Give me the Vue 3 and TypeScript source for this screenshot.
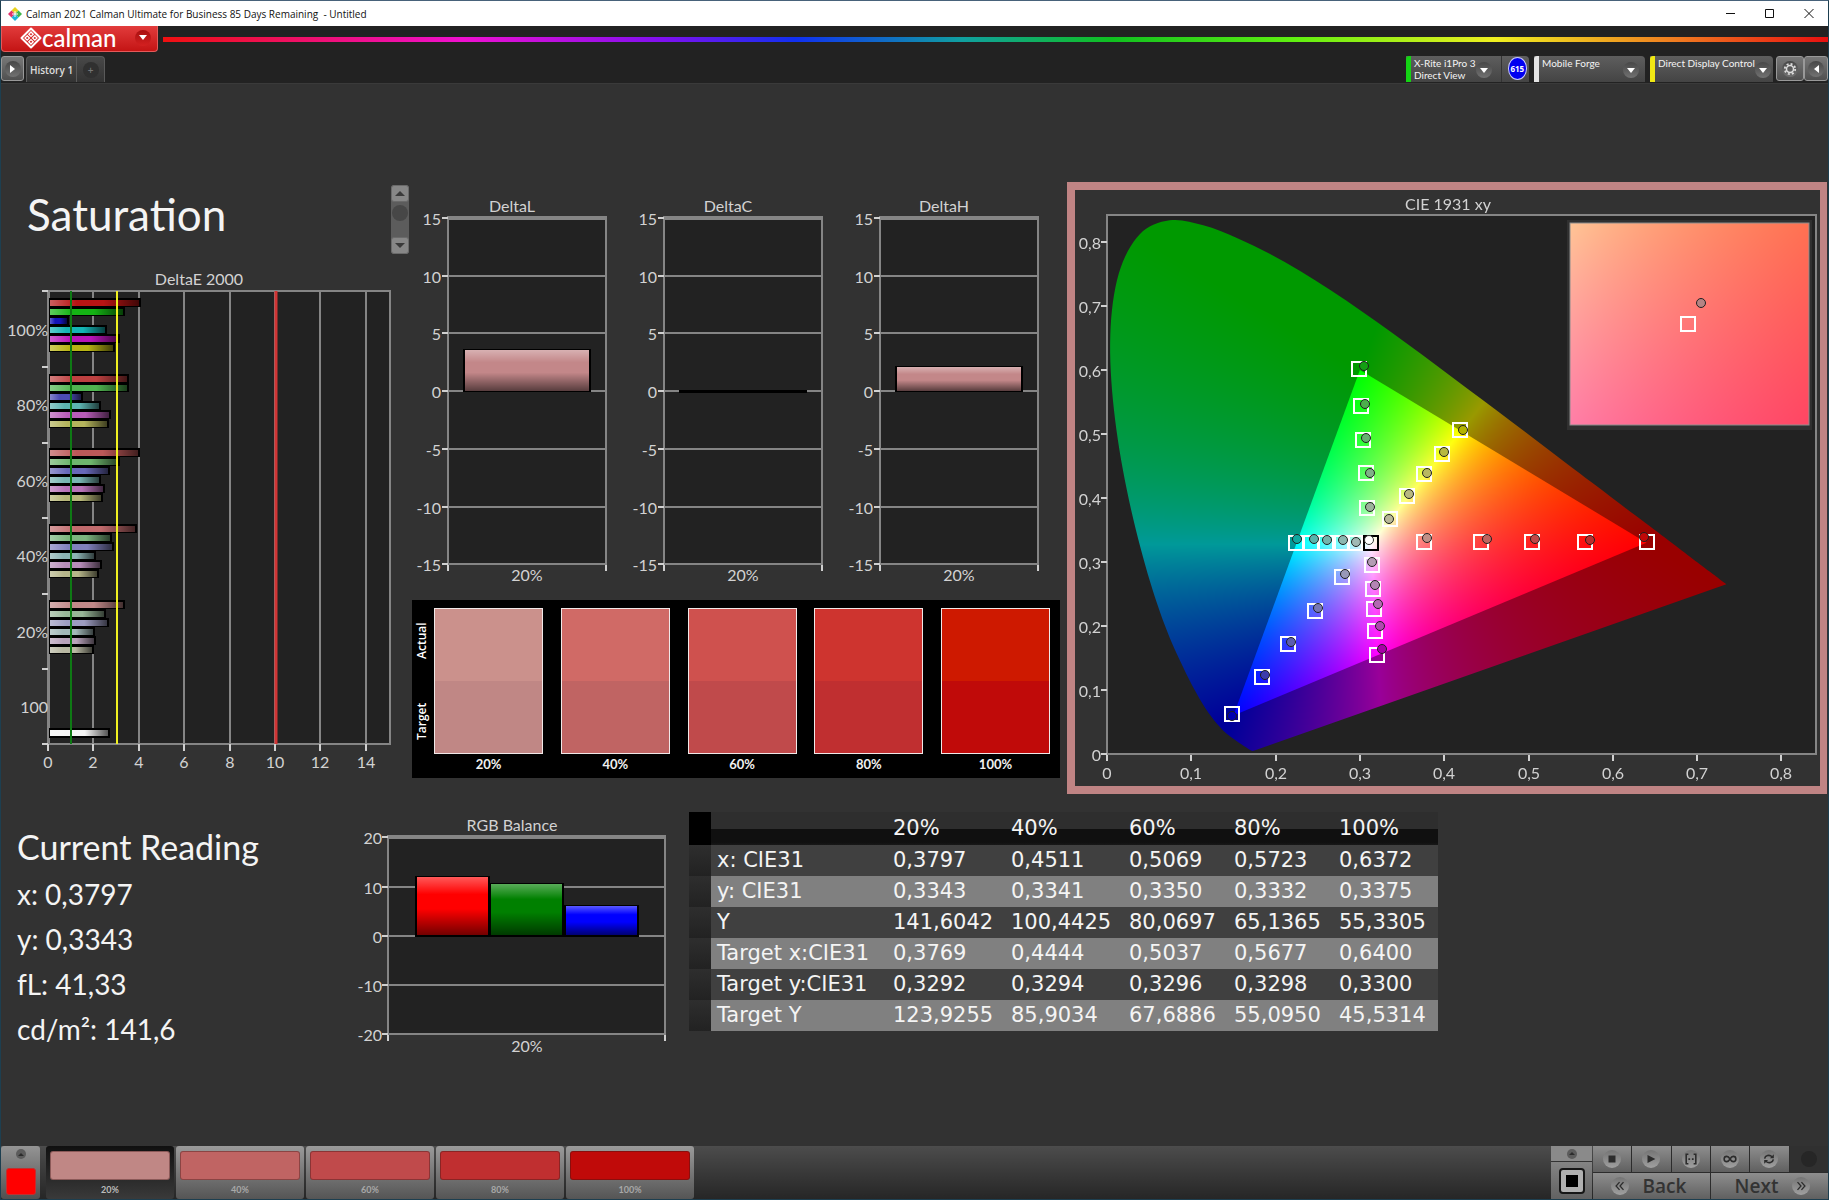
<script setup lang="ts">
import { onMounted, ref } from 'vue'

type Point = [number, number]

interface BarGroup {
  label: string
  y: number
  bars: { end: number; color: string }[]
}

/* ---------- DeltaE 2000 ---------- */
const hueColors: string[][] = [
  ['#b81414', '#14b414', '#1414b8', '#14b4b4', '#b814b8', '#b8b414'],
  ['#bd4040', '#50b450', '#4c4cb4', '#5cb4b0', '#b85cb8', '#b4b45c'],
  ['#bb5858', '#6db56d', '#6868b8', '#78b6b2', '#b872b8', '#b6b678'],
  ['#c06a6c', '#7cb57e', '#8080bc', '#8cb4b4', '#b68cb8', '#b6b68a'],
  ['#c08888', '#98b698', '#9c9cc0', '#a2b8b8', '#b8a2ba', '#b8b8a2'],
]
const barEnds: number[][] = [
  [141, 125, 69, 107, 120, 115],
  [129, 129, 83, 101, 111, 109],
  [140, 120, 110, 101, 105, 103],
  [137, 112, 114, 96, 102, 99],
  [125, 106, 109, 95, 96, 94],
]
const groupTops = [298, 374, 448, 524, 600]
const levels = ['100%', '80%', '60%', '40%', '20%']
const groups: BarGroup[] = levels.map((label, i) => ({
  label,
  y: groupTops[i],
  bars: barEnds[i].map((end, j) => ({ end, color: hueColors[i][j] })),
}))
const deTicksY = [291, 367, 443, 518, 594, 669, 744]
const deTicksX = [0, 2, 4, 6, 8, 10, 12, 14].map((v) => ({ v, x: Math.round(48 + v * 22.7) }))
const deLabels = ['100%', '80%', '60%', '40%', '20%', '100'].map((t, i) => ({ t, y: Math.round(335.6 + i * 75.5) }))

/* ---------- DeltaL / C / H ---------- */
const deltas = [
  { name: 'DeltaL', top: 168, height: 41 },
  { name: 'DeltaC', top: 209, height: 1 },
  { name: 'DeltaH', top: 185, height: 24 },
]
const deltaTicks = [
  { v: 15, y: 36 },
  { v: 10, y: 94 },
  { v: 5, y: 151 },
  { v: 0, y: 209 },
  { v: -5, y: 267 },
  { v: -10, y: 325 },
  { v: -15, y: 382 },
]

/* ---------- swatches ---------- */
const swatches = [
  { label: '20%', actual: '#cb918c', target: '#c08785' },
  { label: '40%', actual: '#d06a66', target: '#c06463' },
  { label: '60%', actual: '#cf514e', target: '#c04a4b' },
  { label: '80%', actual: '#ce342f', target: '#c02f30' },
  { label: '100%', actual: '#ce1900', target: '#c00a09' },
]
const current = ref(0)

/* ---------- RGB balance ---------- */
const rgbTicks = [
  { v: 20, y: 836 },
  { v: 10, y: 886 },
  { v: 0, y: 935 },
  { v: -10, y: 984 },
  { v: -20, y: 1033 },
]
const rgbBars = [
  { x: 416, y: 875, color: '#ff0000' },
  { x: 490, y: 882, color: '#008000' },
  { x: 565, y: 904, color: '#0000ff' },
]

/* ---------- readings ---------- */
const readings = ['x: 0,3797', 'y: 0,3343', 'fL: 41,33', 'cd/m²: 141,6']
const rows = [
  ['x: CIE31', '0,3797', '0,4511', '0,5069', '0,5723', '0,6372'],
  ['y: CIE31', '0,3343', '0,3341', '0,3350', '0,3332', '0,3375'],
  ['Y', '141,6042', '100,4425', '80,0697', '65,1365', '55,3305'],
  ['Target x:CIE31', '0,3769', '0,4444', '0,5037', '0,5677', '0,6400'],
  ['Target y:CIE31', '0,3292', '0,3294', '0,3296', '0,3298', '0,3300'],
  ['Target Y', '123,9255', '85,9034', '67,6886', '55,0950', '45,5314'],
]

/* ---------- chromaticity diagram ---------- */
const X0 = 1107
const Y0 = 754
const SX = 843
const SY = 640
const px = (x: number): number => Math.round(X0 + x * SX)
const py = (y: number): number => Math.round(Y0 - y * SY)
const tenths = [0, 1, 2, 3, 4, 5, 6, 7, 8].map((n) => ({ n: n / 10, t: n === 0 ? '0' : `0,${n}` }))

const targets: Point[] = [
  [0.2986, 0.601], [0.3015, 0.544], [0.3038, 0.491], [0.3078, 0.439], [0.309, 0.385],
  [0.4184, 0.5066], [0.3969, 0.469], [0.3765, 0.4374], [0.3555, 0.4035], [0.3352, 0.367],
  [0.2247, 0.33], [0.2415, 0.33], [0.2595, 0.33], [0.2785, 0.33], [0.2937, 0.33],
  [0.3765, 0.3315], [0.4434, 0.3315], [0.5044, 0.3315], [0.567, 0.3315], [0.64, 0.3315],
  [0.3148, 0.2958], [0.316, 0.2583], [0.3165, 0.2271], [0.3178, 0.1928], [0.3201, 0.1543],
  [0.2793, 0.2766], [0.2473, 0.223], [0.2153, 0.172], [0.1839, 0.12], [0.1484, 0.0628],
]
const actuals: { p: Point; c: string }[] = [
  { p: [0.3044, 0.6065], c: '#14a014' }, { p: [0.3055, 0.5462], c: '#4caf4c' }, { p: [0.3073, 0.493], c: '#66b070' },
  { p: [0.3114, 0.439], c: '#80b088' }, { p: [0.3125, 0.386], c: '#9cb49c' },
  { p: [0.4225, 0.5066], c: '#b4b400' }, { p: [0.3992, 0.4713], c: '#b8b840' }, { p: [0.38, 0.4396], c: '#b8b860' },
  { p: [0.3585, 0.4068], c: '#b8b880' }, { p: [0.334, 0.367], c: '#b8b898' },
  { p: [0.2258, 0.3364], c: '#10a8a0' }, { p: [0.245, 0.3364], c: '#58b4ac' }, { p: [0.2613, 0.335], c: '#74b4ac' },
  { p: [0.2805, 0.335], c: '#8cb8b0' }, { p: [0.295, 0.332], c: '#a0b8b4' },
  { p: [0.38, 0.3369], c: '#c09088' }, { p: [0.451, 0.3364], c: '#c06460' }, { p: [0.5074, 0.3364], c: '#c04848' },
  { p: [0.5725, 0.335], c: '#bc2c2c' }, { p: [0.6365, 0.3395], c: '#c00808' },
  { p: [0.3142, 0.2999], c: '#b49cb4' }, { p: [0.3177, 0.264], c: '#b484b4' }, { p: [0.3212, 0.2338], c: '#b468b4' },
  { p: [0.3236, 0.1995], c: '#b048b0' }, { p: [0.3265, 0.1646], c: '#a800a8' },
  { p: [0.2828, 0.2812], c: '#9898b8' }, { p: [0.2508, 0.2276], c: '#7878b4' }, { p: [0.2188, 0.1756], c: '#5c5cb0' },
  { p: [0.1874, 0.1231], c: '#3c3cac' }, { p: [0.1484, 0.059], c: '#0000b0' },
]

const locus: Point[] = [
  [0.1741, 0.005], [0.1733, 0.0048], [0.1714, 0.0051], [0.1689, 0.0069], [0.1644, 0.0109], [0.1566, 0.0177],
  [0.144, 0.0297], [0.1355, 0.0399], [0.1241, 0.0578], [0.1096, 0.0868], [0.0913, 0.1327], [0.0687, 0.2007],
  [0.0454, 0.295], [0.0235, 0.4127], [0.0082, 0.5384], [0.0039, 0.6548], [0.0139, 0.7502], [0.0389, 0.812],
  [0.0743, 0.8338], [0.1142, 0.8262], [0.1547, 0.8059], [0.1929, 0.7816], [0.2296, 0.7543], [0.2658, 0.7243],
  [0.3016, 0.6923], [0.3373, 0.6589], [0.3731, 0.6245], [0.4087, 0.5896], [0.4441, 0.5547], [0.4788, 0.5202],
  [0.5125, 0.4866], [0.5448, 0.4544], [0.5752, 0.4242], [0.6029, 0.3965], [0.627, 0.3725], [0.6482, 0.3514],
  [0.6658, 0.334], [0.6915, 0.3083], [0.714, 0.2859], [0.726, 0.274], [0.7347, 0.2653],
]
const gamut: Point[] = [[0.64, 0.33], [0.3, 0.6], [0.15, 0.06]]

function xyToRgb(x: number, y: number): [number, number, number] {
  const X = x / y
  const Z = (1 - x - y) / y
  const r = Math.max(0, 3.2406 * X - 1.5372 - 0.4986 * Z)
  const g = Math.max(0, -0.9689 * X + 1.8758 + 0.0415 * Z)
  const b = Math.max(0, 0.0557 * X - 0.204 + 1.057 * Z)
  const m = Math.max(r, g, b, 1e-6)
  return [(r / m) * 255, (g / m) * 255, (b / m) * 255]
}

function field(w: number, h: number, at: (i: number, j: number) => Point, gain: number): HTMLCanvasElement {
  const c = document.createElement('canvas')
  c.width = w
  c.height = h
  const ctx = c.getContext('2d')!
  const img = ctx.createImageData(w, h)
  for (let j = 0; j < h; j++) {
    for (let i = 0; i < w; i++) {
      const [x, y] = at(i, j)
      const rgb = xyToRgb(x, Math.max(y, 0.001))
      const k = (j * w + i) * 4
      img.data[k] = rgb[0] * gain
      img.data[k + 1] = rgb[1] * gain
      img.data[k + 2] = rgb[2] * gain
      img.data[k + 3] = 255
    }
  }
  ctx.putImageData(img, 0, 0)
  return c
}

/* The canvas shares its origin with the vector layer above it. */
const OX = 1075
const OY = 190
const diagram = ref<HTMLCanvasElement | null>(null)

function smoothPath(ctx: CanvasRenderingContext2D, pts: Point[]): void {
  const p = pts.map(([x, y]): Point => [X0 - OX + x * SX, Y0 - OY - y * SY])
  ctx.beginPath()
  ctx.moveTo(p[0][0], p[0][1])
  for (let i = 0; i < p.length - 1; i++) {
    const a = p[Math.max(i - 1, 0)]
    const b = p[i]
    const c = p[i + 1]
    const d = p[Math.min(i + 2, p.length - 1)]
    ctx.bezierCurveTo(
      b[0] + (c[0] - a[0]) / 6, b[1] + (c[1] - a[1]) / 6,
      c[0] - (d[0] - b[0]) / 6, c[1] - (d[1] - b[1]) / 6,
      c[0], c[1],
    )
  }
  ctx.closePath()
}

onMounted(() => {
  const cv = diagram.value
  if (!cv) return
  const ctx = cv.getContext('2d')!
  const at = (i: number, j: number): Point => [(i + OX - X0) / SX, (Y0 - OY - j) / SY]
  ctx.fillStyle = '#222222'
  ctx.fillRect(X0 - OX, 215 - OY, 1816 - X0, Y0 - 215)

  ctx.save()
  smoothPath(ctx, locus)
  ctx.clip()
  ctx.drawImage(field(cv.width, cv.height, at, 0.6), 0, 0)
  ctx.restore()

  ctx.save()
  ctx.beginPath()
  gamut.forEach(([x, y]) => ctx.lineTo(X0 - OX + x * SX, Y0 - OY - y * SY))
  ctx.closePath()
  ctx.clip()
  ctx.drawImage(field(cv.width, cv.height, at, 1), 0, 0)
  ctx.restore()

  const w = 239
  const h = 202
  const near = (i: number, j: number): Point => [0.3769 + ((i - w / 2) / w) * 0.054, 0.3292 - ((j - h / 2) / h) * 0.052]
  ctx.fillStyle = '#303030'
  ctx.fillRect(1567 - OX, 220 - OY, w + 6, h + 8)
  ctx.drawImage(field(w, h, near, 1), 1570 - OX, 223 - OY)
})
</script>

<template>
  <div class="window">
    <header class="titlebar">
      <svg class="app-icon" viewBox="0 0 14 14" aria-hidden="true">
        <path d="M7 0l3.500 3.500L7 7 3.500 3.500z" fill="#e8d21c" />
        <path d="M3.500 3.500L7 7l-3.500 3.500L0 7z" fill="#e2306a" />
        <path d="M10.500 3.500L14 7l-3.500 3.500L7 7z" fill="#3fb54a" />
        <path d="M7 7l3.500 3.500L7 14l-3.500-3.500z" fill="#1cb4d8" />
        <path d="M7 4v6M4 7h6" stroke="#fff" stroke-width="1" />
      </svg>
      <span class="title">Calman 2021 Calman Ultimate for Business 85 Days Remaining&nbsp; - Untitled</span>
      <div class="winctl">
        <button aria-label="Minimize"><svg viewBox="0 0 10 10"><path d="M0 5.500h9" /></svg></button>
        <button aria-label="Maximize"><svg viewBox="0 0 10 10"><path d="M.5 1.500h8v8h-8z" /></svg></button>
        <button aria-label="Close"><svg viewBox="0 0 10 10"><path d="M.5 1l9 9M9.500 1l-9 9" /></svg></button>
      </div>
    </header>

    <div class="brandrow">
      <button class="brand" aria-label="Calman menu">
        <svg class="brand-mark" viewBox="0 0 22 22" aria-hidden="true">
          <path d="M11 1.500L20.500 11 11 20.500 1.500 11z" fill="none" stroke="#fff" stroke-width="2" stroke-linejoin="round" />
          <path d="M11 5l2.200 2.200L11 9.400 8.800 7.200zM7.200 8.800L9.400 11l-2.200 2.200L5 11zM14.800 8.800L17 11l-2.200 2.200-2.200-2.200zM11 12.600l2.200 2.200L11 17l-2.200-2.200z" fill="none" stroke="#fff" stroke-width="1.300" />
        </svg>
        <span class="brand-name">calman</span>
        <span class="dot red"><i class="tri down"></i></span>
      </button>
      <div class="spectrum"></div>
    </div>

    <div class="tabrow">
      <button class="sq play" aria-label="Expand"><span class="dot"><i class="tri right"></i></span></button>
      <nav class="tabs">
        <button class="tab">History 1</button>
        <button class="tab add" aria-label="Add tab"><span class="dot dim">+</span></button>
      </nav>
      <div class="devices">
        <div class="device meter">
          <button class="devbtn"><b class="stripe green"></b><span>X-Rite i1Pro 3<br />Direct View</span><span class="dot"><i class="tri down"></i></span></button>
          <span class="badge">615</span>
        </div>
        <div class="device source">
          <button class="devbtn"><b class="stripe white"></b><span>Mobile Forge</span><span class="dot"><i class="tri down"></i></span></button>
        </div>
        <div class="device display">
          <button class="devbtn"><b class="stripe yellow"></b><span>Direct Display Control</span><span class="dot"><i class="tri down"></i></span></button>
        </div>
        <button class="sq gear" aria-label="Settings">
          <span class="dot">
            <svg viewBox="0 0 14 14" width="14" height="14"><circle cx="7" cy="7" r="3.500" fill="none" stroke="#ddd" stroke-width="1.500" /><circle cx="7" cy="7" r="5.200" fill="none" stroke="#ddd" stroke-width="1.800" stroke-dasharray="2 2.080" /></svg>
          </span>
        </button>
        <button class="sq collapse" aria-label="Collapse"><span class="dot"><i class="tri left"></i></span></button>
      </div>
    </div>

    <main>
      <section class="upper">
        <div class="col-left">
          <div class="heading">
            <h1>Saturation</h1>
            <div class="scroller">
              <button aria-label="Up"><i class="tri up"></i></button>
              <span class="thumb"></span>
              <button aria-label="Down"><i class="tri down"></i></button>
            </div>
          </div>
          <svg class="chart" viewBox="1 264 411 529" role="img" aria-label="DeltaE 2000">
            <defs>
              <linearGradient id="shadeH" x1="0" x2="1" y1="0" y2="0">
                <stop offset="0" stop-color="#fff" stop-opacity=".32" />
                <stop offset=".3" stop-color="#fff" stop-opacity="0" />
                <stop offset=".6" stop-color="#000" stop-opacity="0" />
                <stop offset="1" stop-color="#000" stop-opacity=".65" />
              </linearGradient>
            </defs>
            <text x="199" y="285" class="t mid">DeltaE 2000</text>
            <rect x="48" y="291" width="342" height="453" fill="#222" />
            <path v-for="k in deTicksX" :key="k.v" :d="`M${k.x} 291V744`" class="grid" />
            <rect x="49" y="291" width="341" height="453" fill="none" class="grid" />
            <path v-for="y in deTicksY" :key="y" :d="`M42 ${y}h6`" class="tick" />
            <path v-for="k in deTicksX" :key="'x' + k.v" :d="`M${k.x} 744v7`" class="tick" />
            <g v-for="g in groups" :key="g.label">
              <g v-for="(b, i) in g.bars" :key="i">
                <rect x="49" :y="g.y + i * 9" :width="b.end - 49" height="9" fill="#000" />
                <rect x="50" :y="g.y + i * 9 + 2" :width="b.end - 52" height="6" :fill="b.color" />
                <rect x="50" :y="g.y + i * 9 + 2" :width="b.end - 52" height="6" fill="url(#shadeH)" />
              </g>
            </g>
            <rect x="49" y="728" width="61" height="10" fill="#000" />
            <rect x="50" y="730" width="58" height="6" fill="#f4f4f4" />
            <rect x="50" y="730" width="58" height="6" fill="url(#shadeH)" />
            <path d="M71 291V744" stroke="#0e7a14" stroke-width="2" />
            <path d="M117 291V744" stroke="#f0f020" stroke-width="2" />
            <path d="M276 291V744" stroke="#d23434" stroke-width="3" />
            <text v-for="l in deLabels" :key="l.y" x="48" :y="l.y" class="t end">{{ l.t }}</text>
            <text v-for="k in deTicksX" :key="'l' + k.v" :x="k.x" y="768" class="t mid">{{ k.v }}</text>
          </svg>
        </div>

        <div class="col-mid">
          <div class="deltas">
            <svg v-for="d in deltas" :key="d.name" class="chart" viewBox="0 0 216 418" role="img" :aria-label="d.name">
              <defs>
                <linearGradient id="shadeV" x1="0" x2="0" y1="0" y2="1">
                  <stop offset="0" stop-color="#fff" stop-opacity=".35" />
                  <stop offset=".3" stop-color="#fff" stop-opacity="0" />
                  <stop offset=".55" stop-color="#000" stop-opacity="0" />
                  <stop offset="1" stop-color="#000" stop-opacity=".55" />
                </linearGradient>
              </defs>
              <text x="100" y="30" class="t mid">{{ d.name }}</text>
              <rect x="36" y="36" width="158" height="346" fill="#222" />
              <path v-for="k in deltaTicks" :key="k.v" :d="`M36 ${k.y}H194`" class="grid" />
              <path d="M35 36H195" class="edge" />
              <path d="M36 36V388M194 36V388" class="grid" />
              <path v-for="k in deltaTicks" :key="'t' + k.v" :d="`M30 ${k.y}h6`" class="tick" />
              <path d="M36 383v6M194 383v6" class="tick" />
              <rect x="51" :y="d.top - 1" width="128" :height="d.height + 2" fill="#000" />
              <g v-if="d.height > 4">
                <rect x="53" :y="d.top" width="124" :height="d.height" fill="#c38789" />
                <rect x="53" :y="d.top" width="124" :height="d.height" fill="url(#shadeV)" />
              </g>
              <text v-for="k in deltaTicks" :key="'l' + k.v" x="29" :y="k.y + 7" class="t end">{{ k.v }}</text>
              <text x="115" y="399" class="t mid">20%</text>
            </svg>
          </div>
          <div class="swatchbox">
            <div class="vlabels"><span>Target</span><span>Actual</span></div>
            <div class="figures">
              <figure v-for="s in swatches" :key="s.label">
                <div class="pair">
                  <div :style="{ background: s.actual }"></div>
                  <div :style="{ background: s.target }"></div>
                </div>
                <figcaption>{{ s.label }}</figcaption>
              </figure>
            </div>
          </div>
        </div>

        <div class="col-right">
          <div class="cie">
            <canvas ref="diagram" width="745" height="596"></canvas>
            <svg class="chart" viewBox="1075 190 745 596" role="img" aria-label="CIE 1931 xy">
              <text x="1448" y="210" class="t mid">CIE 1931 xy</text>
              <rect x="1107" y="215" width="709" height="539" fill="none" class="grid" />
              <g v-for="k in tenths" :key="k.t">
                <path :d="`M1101 ${py(k.n)}h6M${px(k.n)} 755v6`" class="tick" />
                <text x="1101" :y="py(k.n) + 7" class="t end">{{ k.t }}</text>
                <text :x="px(k.n)" y="779" class="t mid">{{ k.t }}</text>
              </g>
              <rect x="1570" y="223" width="239" height="202" fill="none" stroke="#8c8c8c" />
              <rect v-for="(p, i) in targets" :key="i" :x="px(p[0]) - 7" :y="py(p[1]) - 7" width="14" height="14" class="target" />
              <rect :x="px(0.3127) - 7" :y="py(0.33) - 7" width="14" height="14" class="target neutral" />
              <circle :cx="px(0.3113)" :cy="py(0.334)" r="4.500" fill="#fff" stroke="#333" />
              <circle v-for="(a, i) in actuals" :key="'a' + i" :cx="px(a.p[0])" :cy="py(a.p[1])" r="4.500" :fill="a.c" class="actual" />
              <rect x="1681" y="317" width="14" height="14" class="target" />
              <circle cx="1701" cy="303" r="4.500" fill="#b48484" class="actual" />
            </svg>
          </div>
        </div>
      </section>

      <section class="lower">
        <div class="reading">
          <h2>Current Reading</h2>
          <p v-for="r in readings" :key="r">{{ r }}</p>
        </div>
        <svg class="chart" viewBox="341 793 340 270" role="img" aria-label="RGB Balance">
          <text x="512" y="830" class="t mid">RGB Balance</text>
          <rect x="388" y="836" width="277" height="198" fill="#222" />
          <path v-for="k in rgbTicks" :key="k.v" :d="`M388 ${k.y}H665`" class="grid" />
          <path d="M387 836H666" class="edge" />
          <path d="M388 836V1039M665 836V1039" class="grid" />
          <path v-for="k in rgbTicks" :key="'t' + k.v" :d="`M382 ${k.y}h6`" class="tick" />
          <path d="M388 1034v6M665 1034v6" class="tick" />
          <g v-for="b in rgbBars" :key="b.x">
            <rect :x="b.x - 1" :y="b.y" width="75" :height="936 - b.y" fill="#000" />
            <rect :x="b.x + 1" :y="b.y + 1" width="71" :height="933 - b.y" :fill="b.color" />
            <rect :x="b.x + 1" :y="b.y + 1" width="71" :height="933 - b.y" fill="url(#shadeV)" />
          </g>
          <text v-for="k in rgbTicks" :key="'l' + k.v" x="382" :y="k.y + 7" class="t end">{{ k.v }}</text>
          <text x="527" y="1051" class="t mid">20%</text>
        </svg>
        <table>
          <colgroup><col class="c0" /><col class="c1" /><col class="c2" /><col class="c2" /><col class="c3" /><col class="c3" /><col class="c3" /></colgroup>
          <thead>
            <tr><td class="stub"></td><th></th><th v-for="s in swatches" :key="s.label" scope="col">{{ s.label }}</th></tr>
          </thead>
          <tbody>
            <tr v-for="r in rows" :key="r[0]">
              <td class="stub"></td>
              <th scope="row">{{ r[0] }}</th>
              <td v-for="(c, i) in r.slice(1)" :key="i">{{ c }}</td>
            </tr>
          </tbody>
        </table>
      </section>
    </main>

    <footer>
      <button class="mini" aria-label="Expand patterns"><span class="puck"><i class="tri up"></i></span><span class="chip"></span></button>
      <div class="steps">
        <button v-for="(s, i) in swatches" :key="s.label" :class="{ on: current === i }" @click="current = i">
          <span class="fillbox" :style="{ background: s.target }"></span>
          <span class="cap">{{ s.label }}</span>
        </button>
      </div>
      <div class="transport">
        <div class="stopcol">
          <button class="upbtn" aria-label="More"><span class="puck"><i class="tri up"></i></span></button>
          <button class="bigstop" aria-label="Pattern window"><span><i></i></span></button>
        </div>
        <div class="keys">
          <div class="keyrow">
            <button aria-label="Stop"><span class="puck l"><svg viewBox="0 0 16 16"><path d="M4 4h8v8H4z" fill="#2c2c2c" /></svg></span></button>
            <button aria-label="Play"><span class="puck l"><svg viewBox="0 0 16 16"><path d="M4 3.500L13 8l-9 4.500z" fill="#2c2c2c" /></svg></span></button>
            <button aria-label="Read series"><span class="puck l"><svg viewBox="0 0 16 16"><path d="M5 2.500H2.500v11H5M11 2.500h2.500v11H11" fill="none" stroke="#2c2c2c" stroke-width="1.800" /><path d="M5 7h2v2H5zM9 7h2v2H9z" fill="#2c2c2c" /></svg></span></button>
            <button aria-label="Continuous"><span class="puck l"><svg viewBox="0 0 16 16"><path d="M8 8C6.500 5.500 5.500 5 4.300 5a3 3 0 000 6C5.500 11 6.500 10.500 8 8s2.500-3 3.700-3a3 3 0 010 6C10.500 11 9.500 10.500 8 8z" fill="none" stroke="#2c2c2c" stroke-width="1.800" /></svg></span></button>
            <button aria-label="Refresh"><span class="puck l"><svg viewBox="0 0 16 16"><path d="M3 7.500C3.500 4 8.500 2.500 11.500 5.500M13 8.500c-.5 3.500-5.500 5-8.500 2" fill="none" stroke="#2c2c2c" stroke-width="1.800" /><path d="M13.500 2.500v4.500H9zM2.500 13.500V9H7z" fill="#2c2c2c" /></svg></span></button>
            <span class="idle"><span class="puck"></span></span>
          </div>
          <div class="keyrow nav">
            <button class="back"><span class="puck l"><svg viewBox="0 0 16 16"><path d="M7.500 3.500L3.500 8l4 4.500M12 3.500L8 8l4 4.500" fill="none" stroke="#2c2c2c" stroke-width="1.500" /></svg></span><span>Back</span></button>
            <button class="next"><span>Next</span><span class="puck l"><svg viewBox="0 0 16 16"><path d="M4 3.500L8 8l-4 4.500M8.500 3.500l4 4.500-4 4.500" fill="none" stroke="#2c2c2c" stroke-width="1.500" /></svg></span></button>
          </div>
        </div>
      </div>
    </footer>
  </div>
</template>

<style>
html,
body {
  margin: 0;
  background: #323232;
}
</style>

<style scoped>
* {
  box-sizing: border-box;
}
.window {
  min-height: 100vh;
  display: flex;
  flex-direction: column;
  border: 1px solid #1d3f50;
  border-top-color: #47627a;
  background: #323232;
  color: #f4f4f4;
  font-family: Lato, 'Open Sans', sans-serif;
}
button {
  border: 0;
  padding: 0;
  margin: 0;
  background: none;
  color: inherit;
  font: inherit;
}
.tri {
  width: 0;
  height: 0;
  border: 4px solid transparent;
}
.tri.down {
  border-top: 5px solid #fff;
  border-bottom: 0;
}
.tri.up {
  border-bottom: 5px solid #2c2c2c;
  border-top: 0;
}
.tri.right {
  border-left: 5px solid #fff;
  border-right: 0;
}
.tri.left {
  border-right: 5px solid #fff;
  border-left: 0;
}
.dot {
  width: 16px;
  height: 16px;
  flex: none;
  border-radius: 50%;
  display: flex;
  align-items: center;
  justify-content: center;
  background: linear-gradient(#474747, #727272);
}
.dot.red {
  background: linear-gradient(#a81010, #d42020);
}
.dot.dim {
  background: #303030;
  color: #777;
}

/* title bar */
.titlebar {
  height: 25px;
  display: flex;
  align-items: center;
  background: #fff;
  color: #111;
  font: 10px/16px 'Open Sans', sans-serif;
}
.app-icon {
  width: 14px;
  height: 14px;
  margin: 0 4px 0 7px;
}
.winctl {
  margin-left: auto;
  display: flex;
}
.winctl button {
  width: 39px;
  height: 25px;
}
.winctl svg {
  width: 10px;
  height: 10px;
  fill: none;
  stroke: #111;
}

/* brand row */
.brandrow {
  height: 29px;
  display: flex;
  background: #222;
  gap: 5px;
}
.brand {
  width: 157px;
  height: 26px;
  display: flex;
  align-items: center;
  padding: 0 6px 2px 18px;
  border: 1px solid #e45a5a;
  border-top: 0;
  border-radius: 0 0 4px 4px;
  background: linear-gradient(#e23c3c, #c41414);
  color: #fff;
}
.brand-mark {
  width: 22px;
  height: 22px;
}
.brand-name {
  font-size: 24px;
  line-height: 22px;
  font-weight: 500;
}
.brand .dot {
  margin-left: auto;
}
.spectrum {
  flex: 1;
  height: 5px;
  margin-top: 11px;
  background: linear-gradient(90deg, #f01010, #f010d0 18%, #8010f0 30%, #1030f0 38%, #10a0a0 48%, #10c020 57%, #60f010 68%, #f0f020 80%, #f07a20 91%, #e81010);
}

/* tab row */
.tabrow {
  height: 28px;
  display: flex;
  align-items: flex-end;
  padding-bottom: 1px;
  background: #222;
  font: 600 10px/12px 'Open Sans', sans-serif;
  color: #ddd;
}
.sq {
  height: 25px;
  display: flex;
  align-items: center;
  justify-content: center;
  margin-bottom: 1px;
  border: 1px solid #999;
  border-radius: 3px;
  background: linear-gradient(#787878, #505050);
}
.play {
  width: 23px;
}
.tabs {
  display: flex;
  height: 26px;
  margin-left: 2px;
  border: 1px solid #5a5a5a;
  border-bottom: 0;
  border-radius: 4px 4px 0 0;
  background: linear-gradient(#484848, #333);
}
.tab {
  width: 49px;
}
.tab.add {
  width: 28px;
  display: flex;
  align-items: center;
  justify-content: center;
  border-left: 1px solid #5a5a5a;
}
.devices {
  margin-left: auto;
  display: flex;
  align-items: flex-end;
  font: 400 10px/12px Lato, sans-serif;
  color: #f4f4f4;
}
.device {
  height: 26px;
  display: flex;
  border-radius: 0 4px 0 0;
  background: linear-gradient(#5e5e5e, #444);
  margin-right: 5px;
}
.devbtn {
  flex: 1;
  display: flex;
  text-align: left;
  padding-right: 6px;
}
.devbtn .dot {
  margin: 6px 0 0 auto;
}
.devbtn > span:nth-child(2) {
  padding-top: 1px;
  white-space: nowrap;
}
.meter {
  width: 123px;
}
.meter .devbtn {
  padding-right: 9px;
  border-right: 1px solid #333;
}
.source {
  width: 111px;
}
.display {
  width: 123px;
  margin-right: 3px;
}
.stripe {
  width: 5px;
  margin-right: 3px;
  border-radius: 3px 0 0 0;
}
.green {
  background: #14d414;
}
.white {
  background: #e4e4e4;
}
.yellow {
  background: #f0e814;
}
.badge {
  width: 23px;
  height: 23px;
  margin: 1px 2px 0 6px;
  border: 1px solid #c8c8ff;
  border-radius: 50%;
  background: #0000f0;
  font: 700 8px/21px 'Open Sans', sans-serif;
  text-align: center;
  color: #fff;
}
.gear {
  width: 28px;
}
.collapse {
  width: 24px;
}

/* main */
main {
  flex: 1;
  padding-top: 98px;
  border-top: 1px solid #3a3a3a;
}
.upper {
  display: grid;
  grid-template-columns: 411fr 650fr 766fr;
  align-items: start;
}
.chart {
  display: block;
  width: 100%;
}
.t {
  font: 16px Lato, sans-serif;
  fill: #d2d2d2;
}
.mid {
  text-anchor: middle;
}
.end {
  text-anchor: end;
}
.grid {
  stroke: #858585;
  stroke-width: 2;
}
.edge {
  stroke: #858585;
  stroke-width: 4;
}
.tick {
  stroke: #d0d0d0;
  stroke-width: 2;
}
.heading {
  height: 82px;
  display: flex;
  justify-content: space-between;
  padding: 3px 3px 0 26px;
}
h1 {
  margin: 4px 0 0;
  font-size: 44px;
  line-height: 50px;
  font-weight: 400;
}
.scroller {
  width: 18px;
  height: 69px;
  display: flex;
  flex-direction: column;
  background: #5c5c5c;
  border-radius: 3px;
}
.scroller button {
  height: 17px;
  display: flex;
  align-items: center;
  justify-content: center;
  border: 1px solid #6a6a6a;
  border-radius: 3px;
  background: #878787;
}
.scroller .tri {
  border-width: 5px;
}
.scroller .up {
  border-top: 0;
  border-bottom-color: #3a3a3a;
}
.scroller .down {
  border-bottom: 0;
  border-top-color: #3a3a3a;
}
.thumb {
  width: 16px;
  height: 16px;
  margin: 3px 1px auto;
  border-radius: 50%;
  background: #474747;
}
.deltas {
  display: grid;
  grid-template-columns: repeat(3, 216fr) 2fr;
}
.swatchbox {
  display: flex;
  height: 178px;
  margin-right: 2px;
  padding: 8px 10px 0 2px;
  background: #000;
}
.vlabels {
  display: flex;
  writing-mode: vertical-rl;
  transform: rotate(180deg);
  width: 16px;
  height: 146px;
  padding: 14px 0;
  margin-right: 4px;
  justify-content: space-between;
  font: 600 12px/16px 'Open Sans', sans-serif;
  color: #fff;
}
.figures {
  flex: 1;
  display: flex;
  justify-content: space-between;
}
figure {
  flex: 0 0 109px;
  margin: 0;
  text-align: center;
}
.pair {
  height: 146px;
  display: grid;
  grid-template-rows: 1fr 1fr;
  border: 1px solid #f0e8e8;
}
figcaption {
  font: 700 13px/20px Lato, sans-serif;
  color: #f0f0f0;
}
.cie {
  display: grid;
  margin: 0 1px 0 5px;
  border: 8px solid #c08484;
  border-right-width: 7px;
}
.cie > * {
  grid-area: 1 / 1;
  width: 100%;
}
.target {
  fill: none;
  stroke: #fff;
  stroke-width: 2;
}
.neutral {
  stroke: #000;
}
.actual {
  stroke: #202020;
  stroke-width: 1;
}

.lower {
  display: grid;
  grid-template-columns: 340fr 340fr 1147fr;
  align-items: start;
}
.reading {
  padding: 34px 0 0 16px;
}
h2 {
  margin: 0 0 6px;
  font-size: 34px;
  line-height: 38px;
  font-weight: 400;
  white-space: nowrap;
}
.reading p {
  margin: 0;
  font-size: 28px;
  line-height: 45px;
}
table {
  width: 748px;
  margin: 18px 0 0 8px;
  table-layout: fixed;
  border-collapse: collapse;
  font: 21px/31px 'DejaVu Sans', 'Open Sans', sans-serif;
}
.c0 {
  width: 22px;
}
.c1 {
  width: 176px;
}
.c2 {
  width: 118px;
}
.c3 {
  width: 105px;
}
th,
td {
  padding: 0 0 0 6px;
  text-align: left;
  font-weight: 400;
  white-space: nowrap;
}
thead th {
  height: 33px;
  background: linear-gradient(#2e2e2e 0 50%, #101010 51% 92%, #181818);
}
thead .stub {
  background: #000;
}
tbody .stub {
  background: linear-gradient(#2e2e2e, #222);
}
tbody tr {
  height: 31px;
  background: #404040;
}
tbody tr:nth-child(even) {
  background: #808080;
}

/* footer */
footer {
  height: 53px;
  display: flex;
  justify-content: space-between;
  background: linear-gradient(rgba(0, 0, 0, 0), rgba(0, 0, 0, .5)), #4c4c4c;
}
.puck {
  width: 10px;
  height: 10px;
  display: flex;
  align-items: center;
  justify-content: center;
  border-radius: 50%;
  background: #5c5c5c;
}
.puck .tri {
  border-width: 3px;
  border-top: 0;
}
.puck.l {
  width: 18px;
  height: 18px;
  background: linear-gradient(#747474, #a0a0a0);
}
.puck.l svg {
  width: 14px;
  height: 14px;
}
.mini {
  width: 39px;
  display: flex;
  flex-direction: column;
  align-items: center;
  padding: 3px 0 4px;
  justify-content: space-between;
  border-radius: 3px;
  background: linear-gradient(#949494, #505050);
}
.chip {
  width: 30px;
  height: 27px;
  border: 1px solid #c03030;
  border-radius: 3px;
  background: #ff0000;
}
.steps {
  display: flex;
  gap: 2px;
  margin: 0 auto 0 6px;
}
.steps button {
  width: 128px;
  padding: 5px 4px 3px;
  display: flex;
  flex-direction: column;
  border-radius: 3px;
  background: linear-gradient(#9a9a9a, #555);
  color: #a8a8a8;
}
.steps .on {
  background: linear-gradient(#101010, #3a3a3a);
  color: #bbb;
}
.fillbox {
  height: 31px;
  border: 1px solid rgba(60, 20, 20, .4);
  border-radius: 3px;
}
.cap {
  font: 700 9px/12px Lato, sans-serif;
  text-align: center;
  margin-top: 4px;
}
.transport {
  display: flex;
  gap: 1px;
  color: #333;
}
.stopcol {
  width: 41px;
  display: flex;
  flex-direction: column;
  gap: 1px;
  background: #333;
}
.upbtn {
  height: 15px;
  display: flex;
  align-items: center;
  justify-content: center;
  background: #8a8a8a;
}
.bigstop {
  flex: 1;
  display: flex;
  align-items: center;
  justify-content: center;
  background: linear-gradient(#848484, #626262);
}
.bigstop span {
  width: 26px;
  height: 26px;
  display: flex;
  align-items: center;
  justify-content: center;
  border: 2px solid #161616;
  border-radius: 4px;
  background: #b0b0b0;
}
.bigstop i {
  width: 12px;
  height: 12px;
  background: #000;
}
.keys {
  width: 235px;
  display: flex;
  flex-direction: column;
  gap: 1px;
  background: #2c2c2c;
}
.keyrow {
  height: 26px;
  display: flex;
  gap: 1px;
}
.keyrow button,
.idle {
  flex: 1;
  display: flex;
  align-items: center;
  justify-content: center;
  background: linear-gradient(#8e8e8e, #606060);
}
.idle {
  background: #303030;
}
.idle .puck {
  width: 16px;
  height: 16px;
  background: #262626;
}
.nav button {
  gap: 14px;
  font: 600 19px/24px 'Open Sans', sans-serif;
}
.nav .back {
  padding-right: 6px;
}
.nav .next {
  padding-left: 6px;
}
</style>
